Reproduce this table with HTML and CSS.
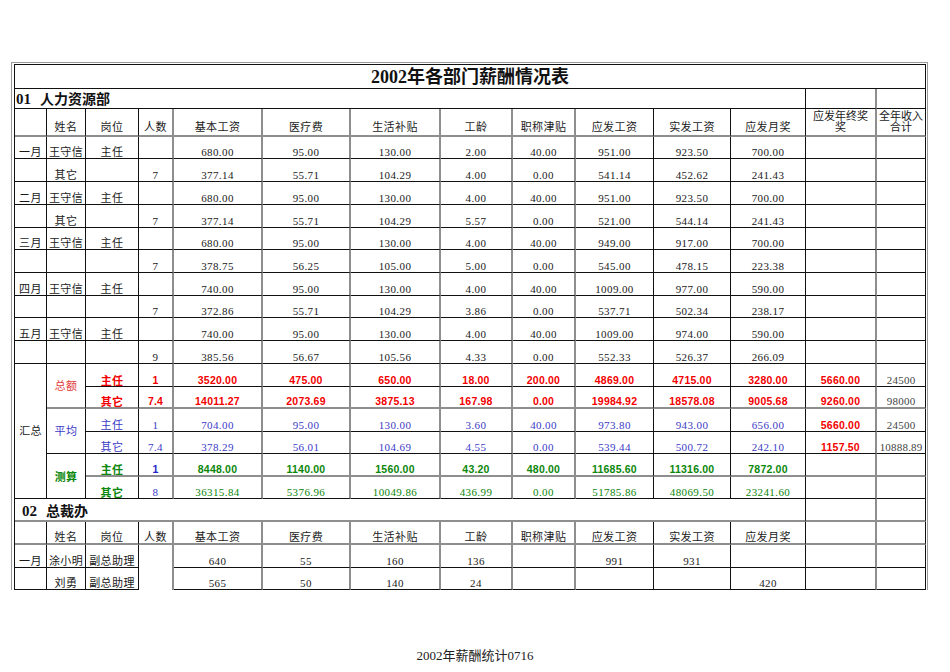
FILE: index.html
```html
<!DOCTYPE html>
<html lang="zh">
<head>
<meta charset="utf-8">
<title>2002年各部门薪酬情况表</title>
<link rel="stylesheet" href="styles.css">
</head>
<body>
<div class="sheet">
<table class="grid">
<colgroup>
<col class="c0"><col class="c1"><col class="c2"><col class="c3"><col class="c4"><col class="c5"><col class="c6"><col class="c7"><col class="c8"><col class="c9"><col class="c10"><col class="c11"><col class="c12"><col class="c13">
</colgroup>
<tbody>
<tr class="h24"><td colspan="14" class="title">2002年各部门薪酬情况表</td></tr>
<tr class="h20"><td colspan="12" class="sec"><span class="num">01</span>人力资源部</td><td></td><td></td></tr>
<tr class="h28 hgr head"><td></td><td>姓名</td><td>岗位</td><td>人数</td><td>基本工资</td><td>医疗费</td><td>生活补贴</td><td>工龄</td><td>职称津贴</td><td>应发工资</td><td>实发工资</td><td>应发月奖</td><td class="wrap">应发年终奖<br>奖</td><td class="wrap">全年收入<br>合计</td></tr>

<tr class="h22"><td>一月</td><td>王守信</td><td>主任</td><td></td><td>680.00</td><td>95.00</td><td>130.00</td><td>2.00</td><td>40.00</td><td>951.00</td><td>923.50</td><td>700.00</td><td></td><td></td></tr>
<tr class="h23"><td></td><td>其它</td><td></td><td>7</td><td>377.14</td><td>55.71</td><td>104.29</td><td>4.00</td><td>0.00</td><td>541.14</td><td>452.62</td><td>241.43</td><td></td><td></td></tr>
<tr class="h23"><td>二月</td><td>王守信</td><td>主任</td><td></td><td>680.00</td><td>95.00</td><td>130.00</td><td>4.00</td><td>40.00</td><td>951.00</td><td>923.50</td><td>700.00</td><td></td><td></td></tr>
<tr class="h23"><td></td><td>其它</td><td></td><td>7</td><td>377.14</td><td>55.71</td><td>104.29</td><td>5.57</td><td>0.00</td><td>521.00</td><td>544.14</td><td>241.43</td><td></td><td></td></tr>
<tr class="h22"><td>三月</td><td>王守信</td><td>主任</td><td></td><td>680.00</td><td>95.00</td><td>130.00</td><td>4.00</td><td>40.00</td><td>949.00</td><td>917.00</td><td>700.00</td><td></td><td></td></tr>
<tr class="h23"><td></td><td></td><td></td><td>7</td><td>378.75</td><td>56.25</td><td>105.00</td><td>5.00</td><td>0.00</td><td>545.00</td><td>478.15</td><td>223.38</td><td></td><td></td></tr>
<tr class="h23"><td>四月</td><td>王守信</td><td>主任</td><td></td><td>740.00</td><td>95.00</td><td>130.00</td><td>4.00</td><td>40.00</td><td>1009.00</td><td>977.00</td><td>590.00</td><td></td><td></td></tr>
<tr class="h22"><td></td><td></td><td></td><td>7</td><td>372.86</td><td>55.71</td><td>104.29</td><td>3.86</td><td>0.00</td><td>537.71</td><td>502.34</td><td>238.17</td><td></td><td></td></tr>
<tr class="h23"><td>五月</td><td>王守信</td><td>主任</td><td></td><td>740.00</td><td>95.00</td><td>130.00</td><td>4.00</td><td>40.00</td><td>1009.00</td><td>974.00</td><td>590.00</td><td></td><td></td></tr>
<tr class="h23"><td></td><td></td><td></td><td>9</td><td>385.56</td><td>56.67</td><td>105.56</td><td>4.33</td><td>0.00</td><td>552.33</td><td>526.37</td><td>266.09</td><td></td><td></td></tr>

<tr class="h23 red"><td rowspan="6" class="mid blk">汇总</td><td rowspan="2" class="mid lred hg">总额</td><td class="cb">主任</td><td>1</td><td>3520.00</td><td>475.00</td><td>650.00</td><td>18.00</td><td>200.00</td><td>4869.00</td><td>4715.00</td><td>3280.00</td><td>5660.00</td><td class="gry">24500</td></tr>
<tr class="h22 red hgr"><td class="cb">其它</td><td>7.4</td><td>14011.27</td><td>2073.69</td><td>3875.13</td><td>167.98</td><td>0.00</td><td>19984.92</td><td>18578.08</td><td>9005.68</td><td>9260.00</td><td class="gry">98000</td></tr>
<tr class="h23 blue"><td rowspan="2" class="mid">平均</td><td>主任</td><td>1</td><td>704.00</td><td>95.00</td><td>130.00</td><td>3.60</td><td>40.00</td><td>973.80</td><td>943.00</td><td>656.00</td><td class="rb">5660.00</td><td class="gry">24500</td></tr>
<tr class="h22 blue"><td>其它</td><td>7.4</td><td>378.29</td><td>56.01</td><td>104.69</td><td>4.55</td><td>0.00</td><td>539.44</td><td>500.72</td><td>242.10</td><td class="rb">1157.50</td><td class="gry">10888.89</td></tr>
<tr class="h23 greenb hgr"><td rowspan="2" class="mid cb keep">测算</td><td class="cb">主任</td><td class="bb">1</td><td>8448.00</td><td>1140.00</td><td>1560.00</td><td>43.20</td><td>480.00</td><td>11685.60</td><td>11316.00</td><td>7872.00</td><td></td><td></td></tr>
<tr class="h22 green"><td class="cb">其它</td><td class="bn">8</td><td>36315.84</td><td>5376.96</td><td>10049.86</td><td>436.99</td><td>0.00</td><td>51785.86</td><td>48069.50</td><td>23241.60</td><td></td><td></td></tr>

<tr class="h23 hgr"><td colspan="12" class="sec sec2"><span class="num">02</span>总裁办</td><td></td><td></td></tr>
<tr class="h23 hgr"><td></td><td>姓名</td><td>岗位</td><td>人数</td><td>基本工资</td><td>医疗费</td><td>生活补贴</td><td>工龄</td><td>职称津贴</td><td>应发工资</td><td>实发工资</td><td>应发月奖</td><td></td><td></td></tr>
<tr class="h23"><td>一月</td><td>涂小明</td><td>副总助理</td><td rowspan="2" class="nob"></td><td>640</td><td>55</td><td>160</td><td>136</td><td></td><td>991</td><td>931</td><td></td><td></td><td></td></tr>
<tr class="h22 r2"><td></td><td>刘勇</td><td>副总助理</td><td>565</td><td>50</td><td>140</td><td>24</td><td></td><td></td><td></td><td>420</td><td></td><td></td></tr>
</tbody>
</table>
</div>
<div class="foot">2002年薪酬统计0716</div>
</body>
</html>
```

FILE: styles.css
```css
html, body {
  margin: 0;
  padding: 0;
  background: #ffffff;
}

body {
  font-family: "Liberation Serif", "Noto Sans CJK SC", serif;
  color: #1a1a1a;
}

.sheet {
  box-sizing: border-box;
  margin: 62px 0 0 11px;
  width: 917px;
  border: 1px solid #9a9a9a;
  border-bottom: 0;
  padding: 1px 1px 0 2px;
}

.grid {
  width: 912px;
  table-layout: fixed;
  border-collapse: separate;
  border-spacing: 0;
  border-top: 1px solid #111;
  border-left: 1px solid #111;
}

.c0 { width: 32px; }
.c1 { width: 39px; }
.c2 { width: 53px; }
.c3 { width: 35px; }
.c4 { width: 89px; }
.c5 { width: 88px; }
.c6 { width: 90px; }
.c7 { width: 72px; }
.c8 { width: 63px; }
.c9 { width: 78px; }
.c10 { width: 77px; }
.c11 { width: 75px; }
.c12 { width: 71px; }
.c13 { width: 49px; }

.grid td {
  border-right: 1px solid #111;
  border-bottom: 1px solid #111;
  padding: 0 1px;
  font-size: 11px;
  line-height: 12px;
  letter-spacing: 0.4px;
  font-weight: 400;
  vertical-align: bottom;
  text-align: center;
  white-space: nowrap;
  overflow: hidden;
}

/* grey (anti-aliased looking) vertical rules */
.grid td:nth-last-child(2),
.grid td:nth-last-child(n+6):nth-last-child(-n+11) {
  border-right: 2px solid #8e8e8e;
}
.grid tr.r2 td:nth-last-child(11) {
  border-right: 1px solid #111;
}

.grid tr.hgr td,
.grid td.hg {
  border-bottom: 2px solid #8e8e8e;
}
.grid tr.hgr td.keep {
  border-bottom: 1px solid #111;
}

.h20 { height: 20px; }
.h22 { height: 22px; }
.h23 { height: 23px; }
.h24 { height: 24px; }
.h28 { height: 28px; }

.grid td.title {
  font-size: 18px;
  line-height: 20px;
  font-weight: 700;
  letter-spacing: 0;
  vertical-align: middle;
  color: #111;
}

.grid td.sec {
  text-align: left;
  font-size: 14px;
  line-height: 16px;
  font-weight: 700;
  letter-spacing: 0;
  color: #111;
  padding-left: 1px;
}
.grid td.sec2 {
  padding-left: 7px;
}
.sec .num {
  font-size: 15px;
  margin-right: 9px;
}

.grid tr.head td {
  padding-bottom: 2px;
}
.grid tr.head td.wrap {
  white-space: normal;
  vertical-align: top;
  line-height: 11px;
  letter-spacing: 0;
  padding-top: 2px;
  padding-bottom: 0;
}

.grid td.mid {
  vertical-align: middle;
}

.grid td.nob {
  border-bottom: 0;
}

/* summary colours */
.grid tr.red td {
  color: #f20000;
  font-family: "Liberation Sans", "Noto Sans CJK SC", sans-serif;
  font-weight: 700;
  font-size: 10.5px;
  letter-spacing: 0.2px;
}
.grid tr.greenb td {
  color: #0b870b;
  font-family: "Liberation Sans", "Noto Sans CJK SC", sans-serif;
  font-weight: 700;
  font-size: 10.5px;
  letter-spacing: 0.2px;
}
.grid tr.blue td {
  color: #3a3ac6;
}
.grid tr.green td {
  color: #0b870b;
}

.grid tr td.cb {
  font-family: "Noto Sans CJK SC", sans-serif;
  font-weight: 700;
  font-size: 11px;
}
.grid tr.red td.blk {
  color: #1a1a1a;
  font-family: "Liberation Serif", "Noto Sans CJK SC", serif;
  font-weight: 400;
  font-size: 11px;
}
.grid tr.red td.lred {
  color: #e23b3b;
  font-family: "Liberation Serif", "Noto Sans CJK SC", serif;
  font-weight: 400;
  font-size: 11px;
}
.grid tr td.rb {
  color: #f20000;
  font-family: "Liberation Sans", sans-serif;
  font-weight: 700;
  font-size: 10.5px;
  letter-spacing: 0.2px;
}
.grid tr td.gry {
  color: #444;
  font-family: "Liberation Serif", serif;
  font-weight: 400;
  font-size: 11px;
  letter-spacing: 0.2px;
}
.grid tr td.bb {
  color: #2323c8;
  font-family: "Liberation Sans", sans-serif;
  font-weight: 700;
}
.grid tr td.bn {
  color: #3a3ac6;
  font-weight: 400;
  font-family: "Liberation Serif", serif;
  font-size: 11px;
}

.foot {
  margin-top: 58px;
  text-align: center;
  font-size: 13px;
  line-height: 16px;
  color: #222;
}
```
